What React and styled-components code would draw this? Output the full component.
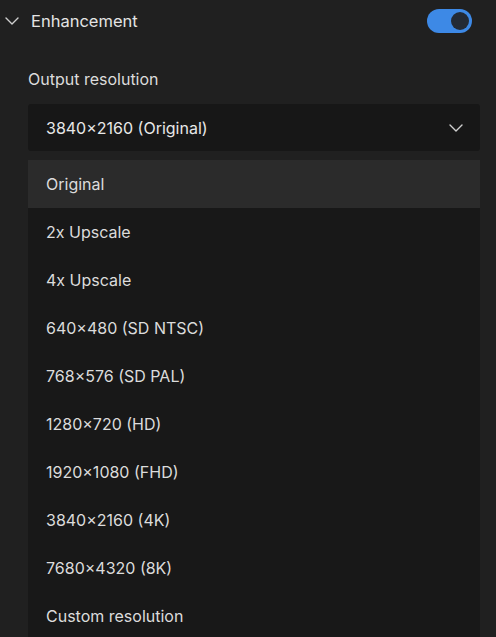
import React from 'react';
import styled, { createGlobalStyle } from 'styled-components';

const Global = createGlobalStyle`
  html, body {
    margin: 0;
    padding: 0;
    background: #202020;
    height: 100%;
    overflow: hidden;
  }
  body {
    font-family: Inter, "Noto Sans", sans-serif;
    color: #e2e2e2;
  }
`;

const Panel = styled.div`
  width: 496px;
  height: 637px;
  background: #202020;
  overflow: hidden;
`;

const Header = styled.div`
  display: flex;
  align-items: center;
  height: 42px;
  padding: 0 24px 0 4px;
`;

const Title = styled.div`
  flex: 1;
  font-size: 16.5px;
  margin-left: 11px;
  color: #e4e4e4;
`;

const Toggle = styled.div`
  width: 45px;
  height: 24px;
  border-radius: 12px;
  background: #3d89e6;
  display: flex;
  align-items: center;
  justify-content: flex-end;
  padding: 0 3px;
  box-sizing: border-box;
`;

const Knob = styled.div`
  width: 18px;
  height: 18px;
  border-radius: 50%;
  background: #232a35;
`;

const Body = styled.div`
  padding: 27px 16px 0 28px;
`;

const Label = styled.div`
  font-size: 16px;
  color: #dcdcdc;
  margin-bottom: 15px;
`;

const Select = styled.div`
  height: 47px;
  background: #171717;
  border-radius: 3px;
  display: flex;
  align-items: center;
  padding: 0 16px 0 18px;
  font-size: 16px;
  color: #e8e8e8;
`;

const SelectText = styled.div`
  flex: 1;
`;

const Menu = styled.div`
  margin-top: 9px;
  background: #181818;
  border-radius: 3px;
  height: 600px;
`;

const Item = styled.div`
  height: 48px;
  display: flex;
  align-items: center;
  padding-left: 18px;
  font-size: 16px;
  color: #dcdcdc;
  background: ${p => (p.$active ? '#2b2b2b' : 'transparent')};
`;

const Chevron = ({ size = 14 }) => (
  <svg width={size} height={size} viewBox="0 0 16 16" fill="none">
    <path d="M2 5l6 6 6-6" stroke="#cfcfcf" strokeWidth="1.4" strokeLinecap="round" strokeLinejoin="round" />
  </svg>
);

const options = [
  'Original',
  '2x Upscale',
  '4x Upscale',
  '640×480 (SD NTSC)',
  '768×576 (SD PAL)',
  '1280×720 (HD)',
  '1920×1080 (FHD)',
  '3840×2160 (4K)',
  '7680×4320 (8K)',
  'Custom resolution',
];

export default function App() {
  return (
    <Panel>
      <Global />
      <Header>
        <Chevron size={16} />
        <Title>Enhancement</Title>
        <Toggle>
          <Knob />
        </Toggle>
      </Header>
      <Body>
        <Label>Output resolution</Label>
        <Select>
          <SelectText>3840×2160 (Original)</SelectText>
          <Chevron size={16} />
        </Select>
        <Menu>
          {options.map((o, i) => (
            <Item key={o} $active={i === 0}>{o}</Item>
          ))}
        </Menu>
      </Body>
    </Panel>
  );
}
